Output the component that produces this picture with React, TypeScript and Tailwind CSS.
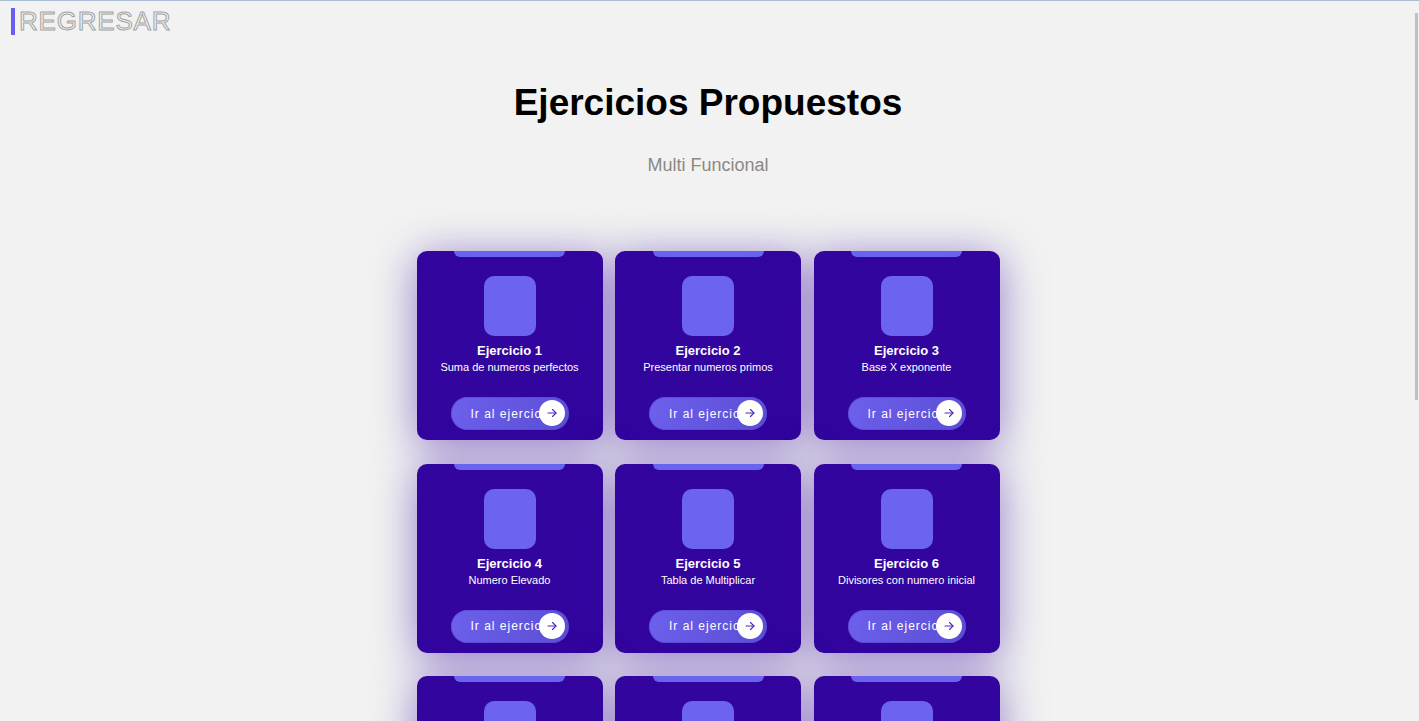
import React from "react";

const EJERCICIOS = [
  { n: 1, desc: "Suma de numeros perfectos" },
  { n: 2, desc: "Presentar numeros primos" },
  { n: 3, desc: "Base X exponente" },
  { n: 4, desc: "Numero Elevado" },
  { n: 5, desc: "Tabla de Multiplicar" },
  { n: 6, desc: "Divisores con numero inicial" },
  { n: 7, desc: "Serie de Fibonacci" },
  { n: 8, desc: "Factorial de un numero" },
  { n: 9, desc: "Numeros pares e impares" },
  { n: 10, desc: "Invertir un numero" },
  { n: 11, desc: "Maximo comun divisor" },
  { n: 12, desc: "Numero palindromo" },
];

function Card({ n, desc }: { n: number; desc: string }) {
  return (
    <div className="relative flex h-[189px] w-[186px] flex-col items-center rounded-[10px] bg-[#33059f] shadow-[0_6px_44px_rgba(51,5,160,0.5)]">
      <div className="h-[6px] w-[111px] rounded-b-[6px] bg-[#6a63f0]" />
      <div className="mt-[19px] h-[60px] w-[52px] rounded-[10px] bg-[#6c63f0]" />
      <div className="mt-[7px] text-[13px] font-bold leading-[16px] text-white">Ejercicio {n}</div>
      <div className="mt-[1px] text-[11px] leading-[14px] text-white">{desc}</div>
      <button className="relative mt-[23px] flex h-[33px] w-[118px] items-center overflow-hidden rounded-full bg-gradient-to-r from-[#6c60ec] to-[#5c4fd6] pl-[20px] shadow-[inset_0_0_0_1px_rgba(90,70,210,0.6)]">
        <span className="whitespace-nowrap text-[12px] tracking-[1px] text-white">Ir al ejercicio</span>
        <span className="absolute right-[4px] top-[3px] flex h-[26px] w-[26px] items-center justify-center rounded-full bg-white">
          <svg width="12" height="12" viewBox="0 0 24 24" fill="none" stroke="#4b2ab8" strokeWidth="2.2" strokeLinecap="round" strokeLinejoin="round">
            <path d="M4 12h16" />
            <path d="M13 5l7 7-7 7" />
          </svg>
        </span>
      </button>
    </div>
  );
}

export default function App() {
  return (
    <div className="relative h-screen overflow-y-auto border-t border-[#a9bcd6] bg-[#f2f2f2] pr-[3px] font-['Liberation_Sans',Arial,sans-serif]">
      {/* thin scrollbar thumb */}
      <div className="fixed right-[1px] top-[13px] h-[387px] w-[3px] bg-[#c1c1c1]" />
      <header className="pl-[11px] pt-[7px]">
        <a className="inline-block border-l-4 border-[#6a5cf0] pl-[4px] text-[26px] leading-[27px] tracking-[0.8px] text-transparent [-webkit-text-stroke:1px_#a3a3a3]">
          REGRESAR
        </a>
      </header>
      <h1 className="mt-[44px] text-center text-[37px] font-bold leading-[44px] text-black">Ejercicios Propuestos</h1>
      <p className="mt-[29px] text-center text-[18px] leading-[22px] text-[#8c8884]">Multi Funcional</p>
      <div className="mx-auto mt-[75px] grid w-fit grid-cols-3 gap-x-[12.5px] gap-y-[23.5px] pb-[220px]">
        {EJERCICIOS.map((e) => (
          <Card key={e.n} n={e.n} desc={e.desc} />
        ))}
      </div>
    </div>
  );
}
